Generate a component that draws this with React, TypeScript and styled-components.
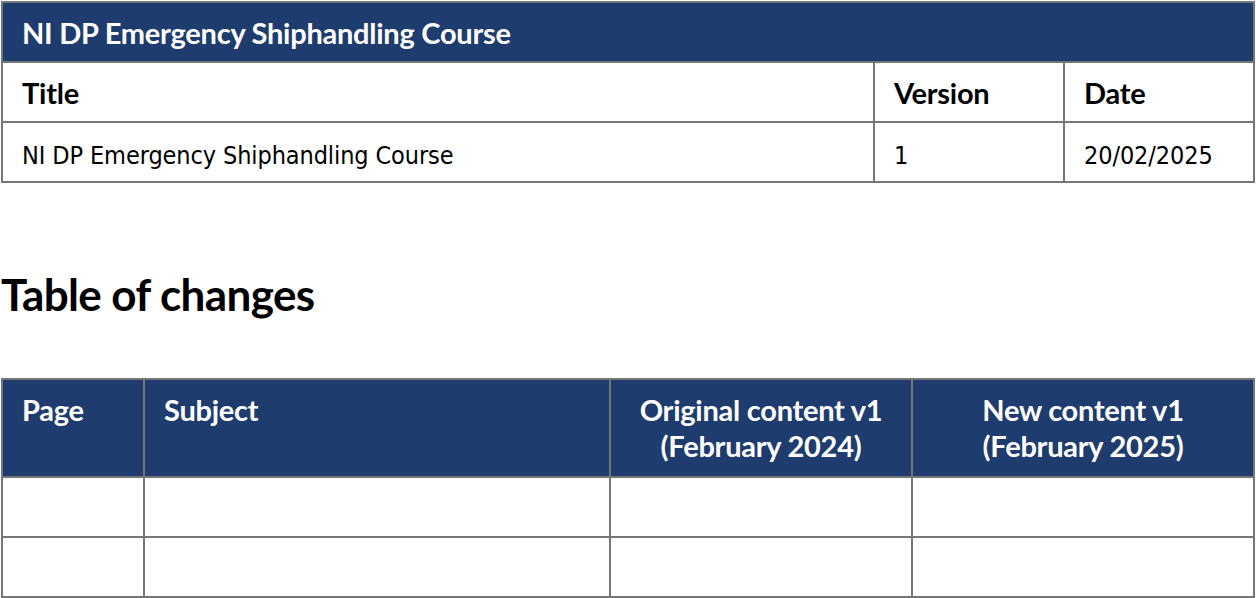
import React from "react";
import styled, { createGlobalStyle } from "styled-components";

const GlobalStyle = createGlobalStyle`
  html, body {
    margin: 0;
    padding: 0;
    background: #ffffff;
  }
  body {
    font-family: Lato, "Open Sans", sans-serif;
    color: #000000;
  }
`;

const NAVY = "#1f3c6e";
const LINE = "#767676";

const Page = styled.div`
  width: 1256px;
  padding: 1px 1px 0 1px;
  box-sizing: border-box;
`;

const Table = styled.table`
  width: 100%;
  border-collapse: collapse;
  table-layout: fixed;
  border: 2px solid ${LINE};
`;

const Cell = styled.td<{ $head?: boolean; $bold?: boolean; $center?: boolean; $h: number }>`
  border: 2px solid ${LINE};
  height: ${(p) => p.$h}px;
  padding: ${(p) => (p.$center ? "0" : "0 0 0 19px")};
  box-sizing: border-box;
  background: ${(p) => (p.$head ? NAVY : "#ffffff")};
  color: ${(p) => (p.$head ? "#ffffff" : "#000000")};
  font-weight: ${(p) => (p.$bold || p.$head ? 700 : 400)};
  font-size: 29px;
  letter-spacing: -0.25px;
  text-align: ${(p) => (p.$center ? "center" : "left")};
  white-space: nowrap;
`;

const TopCell = styled(Cell)`
  vertical-align: top;
  padding-top: 12px;
  line-height: 36px;
`;

const Plain = styled.span`
  font-family: "DejaVu Sans Condensed", "Noto Sans", sans-serif;
  font-stretch: condensed;
  font-size: 25px;
  letter-spacing: -0.1px;
`;

const Heading = styled.h2`
  margin: 90px 0 63px 0;
  font-size: 44px;
  font-weight: 700;
  line-height: 42px;
  letter-spacing: -0.6px;
`;

export default function App() {
  return (
    <>
      <GlobalStyle />
      <Page>
        <Table>
          <colgroup>
            <col style={{ width: 872 }} />
            <col style={{ width: 190 }} />
            <col />
          </colgroup>
          <tbody>
            <tr>
              <Cell $head $h={60} colSpan={3}>
                NI DP Emergency Shiphandling Course
              </Cell>
            </tr>
            <tr>
              <Cell $bold $h={60}>Title</Cell>
              <Cell $bold $h={60}>Version</Cell>
              <Cell $bold $h={60}>Date</Cell>
            </tr>
            <tr>
              <Cell $h={60}><Plain>NI DP Emergency Shiphandling Course</Plain></Cell>
              <Cell $h={60}><Plain>1</Plain></Cell>
              <Cell $h={60}><Plain>20/02/2025</Plain></Cell>
            </tr>
          </tbody>
        </Table>

        <Heading>Table of changes</Heading>

        <Table>
          <colgroup>
            <col style={{ width: 142 }} />
            <col style={{ width: 466 }} />
            <col style={{ width: 302 }} />
            <col />
          </colgroup>
          <tbody>
            <tr>
              <TopCell $head $h={98}>Page</TopCell>
              <TopCell $head $h={98}>Subject</TopCell>
              <TopCell $head $center $h={98}>
                Original content v1
                <br />
                (February 2024)
              </TopCell>
              <TopCell $head $center $h={98}>
                New content v1
                <br />
                (February 2025)
              </TopCell>
            </tr>
            {[0, 1].map((r) => (
              <tr key={r}>
                <Cell $h={60} />
                <Cell $h={60} />
                <Cell $h={60} />
                <Cell $h={60} />
              </tr>
            ))}
          </tbody>
        </Table>
      </Page>
    </>
  );
}
